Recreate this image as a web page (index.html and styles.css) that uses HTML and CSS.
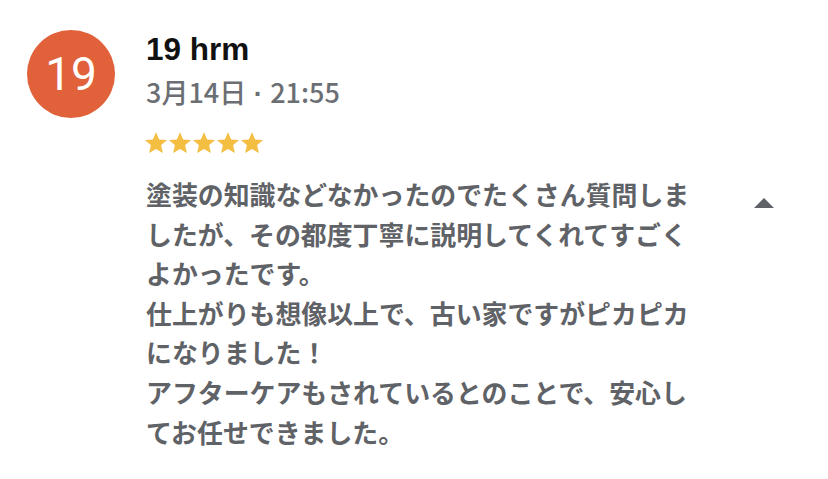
FILE: index.html
```html
<!DOCTYPE html>
<html lang="ja">
<head>
<meta charset="utf-8">
<link rel="stylesheet" href="styles.css">
</head>
<body>
<div class="review">
  <div class="avatar">19</div>
  <div class="content">
    <div class="name">19 hrm</div>
    <div class="date">3月14日<span class="dot"> · </span>21:55</div>
    <div class="stars">
      <svg class="star" viewBox="0 0 24 24"><path d="M12 1.2l3.2 7.2 7.8.7-5.9 5.2 1.8 7.7L12 18l-6.9 4 1.8-7.7L1 9.1l7.8-.7z"/></svg>
      <svg class="star" viewBox="0 0 24 24"><path d="M12 1.2l3.2 7.2 7.8.7-5.9 5.2 1.8 7.7L12 18l-6.9 4 1.8-7.7L1 9.1l7.8-.7z"/></svg>
      <svg class="star" viewBox="0 0 24 24"><path d="M12 1.2l3.2 7.2 7.8.7-5.9 5.2 1.8 7.7L12 18l-6.9 4 1.8-7.7L1 9.1l7.8-.7z"/></svg>
      <svg class="star" viewBox="0 0 24 24"><path d="M12 1.2l3.2 7.2 7.8.7-5.9 5.2 1.8 7.7L12 18l-6.9 4 1.8-7.7L1 9.1l7.8-.7z"/></svg>
      <svg class="star" viewBox="0 0 24 24"><path d="M12 1.2l3.2 7.2 7.8.7-5.9 5.2 1.8 7.7L12 18l-6.9 4 1.8-7.7L1 9.1l7.8-.7z"/></svg>
    </div>
    <div class="body-row">
      <p class="text">塗装の知識などなかったのでたくさん質問しましたが、その都度丁寧に説明してくれてすごくよかったです。<br>仕上がりも想像以上で、古い家ですがピカピカになりました！<br>アフターケアもされているとのことで、安心してお任せできました。</p>
      <div class="toggle"><svg width="20" height="10" viewBox="0 0 20 10"><path d="M0 10 L10 0 L20 10 Z" fill="#5f6368"/></svg></div>
    </div>
  </div>
</div>
</body>
</html>
```
FILE: styles.css
```css
html, body {
  margin: 0;
  padding: 0;
  background: #ffffff;
}
body {
  font-family: "Liberation Sans", "Noto Sans CJK JP", sans-serif;
  width: 828px;
  height: 479px;
  overflow: hidden;
}
.review {
  display: flex;
  align-items: flex-start;
  padding: 30px 0 0 27px;
  gap: 31px;
}
.avatar {
  width: 88px;
  height: 88px;
  border-radius: 50%;
  background: #e0613a;
  color: #ffffff;
  font-family: "Roboto", "Noto Sans", sans-serif;
  font-weight: 400;
  font-size: 46px;
  display: flex;
  align-items: center;
  justify-content: center;
  flex-shrink: 0;
}
.content {
  display: flex;
  flex-direction: column;
}
.name {
  font-weight: 700;
  font-size: 31.5px;
  line-height: 38px;
  color: #111111;
}
.date {
  margin-top: 7px;
  font-family: "Noto Sans CJK JP", sans-serif;
  font-weight: 500;
  font-size: 27px;
  line-height: 34px;
  color: #6b6e73;
}
.dot {
  font-family: "Liberation Sans", sans-serif;
  font-weight: 700;
}
.stars {
  margin-top: 20px;
  display: flex;
  height: 24px;
  margin-left: -2px;
}
.star {
  width: 24px;
  height: 24px;
  fill: #f4be42;
}
.body-row {
  display: flex;
  align-items: flex-start;
  margin-top: 19px;
}
.text {
  margin: 0;
  width: 550px;
  font-family: "Noto Sans CJK JP", sans-serif;
  font-weight: 600;
  font-size: 25.9px;
  line-height: 39.6px;
  color: #5f6266;
}
.toggle {
  margin-left: 58px;
  padding-top: 20px;
}
```
